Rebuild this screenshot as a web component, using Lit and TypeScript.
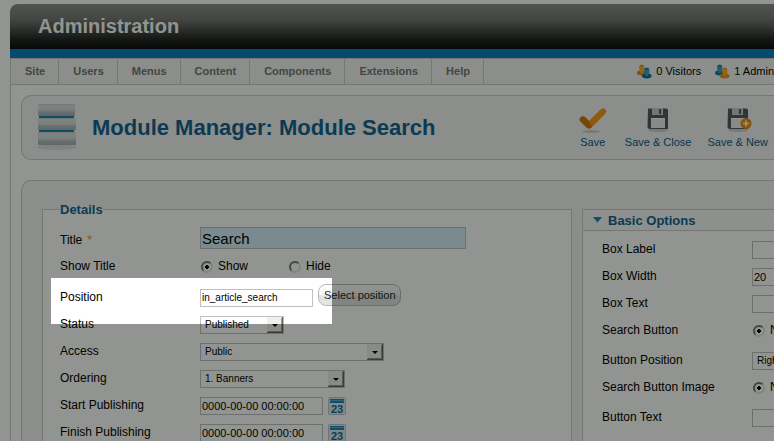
import { LitElement, html, css, svg } from "lit";
import { customElement } from "lit/decorators.js";

const calendar = html`<svg width="18" height="18" viewBox="0 0 18 18" aria-hidden="true">
  <rect x="0.5" y="0.5" width="17" height="17" rx="1" fill="#e4e9ed" stroke="#c3c9cd" />
  <rect x="2" y="2" width="14" height="4" fill="#1e87bd" />
  <path d="M2 3.500h14" stroke="#53addb" />
  <text x="9" y="15.500" text-anchor="middle" font-family="Liberation Sans, sans-serif" font-weight="bold" font-size="11" fill="#10699c">23</text>
</svg>`;

const person = (x: number, y: number, light: string, dark: string) => svg`<g transform="translate(${x} ${y})">
  <path d="M0 8.500C0 6.500 1 5.800 3 5.500L6.500 5.500C8.500 5.800 9.500 6.500 9.500 8.500Q9.300 10.300 4.700 10.400Q0.200 10.300 0 8.500Z" fill="${dark}" />
  <path d="M3 5L6.500 5L6.700 7L4.800 8.500L2.800 7Z" fill="${light}" />
  <ellipse cx="4.700" cy="3" rx="2.700" ry="3.200" fill="${light}" />
  <path d="M2.300 1.800Q2.800 -0.200 4.700 -0.200Q6.700 -0.200 7.200 1.800Q5 0.900 2.300 1.800Z" fill="${dark}" />
</g>`;

const users = (swap: boolean) => html`<svg width="16" height="16" viewBox="0 0 16 16" aria-hidden="true">
  ${swap ? person(0, 1, "#37a0cc", "#16769f") : person(0, 1, "#fbb02c", "#e58d18")}
  ${swap ? person(5, 4, "#fbb02c", "#ec9320") : person(5, 4, "#37a0cc", "#136c94")}
</svg>`;

const check = html`<svg width="30" height="28" viewBox="0 0 30 28" aria-hidden="true">
  <ellipse cx="13" cy="25.500" rx="9" ry="1.500" fill="#000" opacity=".16" />
  <path d="M2 12Q4 9 7 11L11 15L23 3Q26 1 28 4Q29 6 27 8L14 21Q11 24 8 21L2 15Q1 13.500 2 12Z" fill="#fa9a18" />
  <path d="M2 12Q4 9 7 11L11 15L14 21Q11 24 8 21L2 15Q1 13.500 2 12Z" fill="#cf780c" />
</svg>`;

const floppy = (plus: boolean) => html`<svg width="30" height="28" viewBox="0 0 30 28" aria-hidden="true">
  <ellipse cx="15" cy="24" rx="10" ry="2" fill="#000" opacity=".14" />
  <path d="M5 2.500H24L25 4V23H6L4.500 21.500Z" fill="#555a62" />
  <rect x="9" y="2" width="11" height="7" fill="#c9ced2" />
  <rect x="16" y="3" width="2" height="5" fill="#555a62" />
  <rect x="8" y="12" width="14" height="10" fill="#eeefee" />
  <path d="M8 12H22V13H8Z" fill="#fff" />
  ${plus
    ? svg`<circle cx="23" cy="17.500" r="5.500" fill="#ef8f16" />
      <path d="M23 14.500v6M20 17.500h6" stroke="#fff" stroke-width="1.600" />`
    : ""}
</svg>`;

const modules = html`<svg width="48" height="48" viewBox="0 0 48 48" aria-hidden="true">
  <defs>
    <linearGradient id="slab" x2="0" y2="1">
      <stop offset="0" stop-color="#c4cacf" /><stop offset=".15" stop-color="#dfe3e6" />
      <stop offset=".55" stop-color="#d3d7db" /><stop offset=".65" stop-color="#bac0c6" />
      <stop offset="1" stop-color="#a8afb6" />
    </linearGradient>
  </defs>
  <ellipse cx="25" cy="43" rx="20" ry="3" fill="#000" opacity=".08" />
  <rect x="7" y="11" width="35" height="4" fill="#1684b5" />
  <rect x="7" y="25" width="35" height="4" fill="#1684b5" />
  <rect x="6" y="0" width="37" height="12" rx="1" fill="url(#slab)" />
  <rect x="6" y="14" width="38" height="12" rx="1" fill="url(#slab)" />
  <rect x="6" y="28" width="38" height="13" rx="1" fill="url(#slab)" />
</svg>`;

@customElement("app-root")
export class AppRoot extends LitElement {
  static styles = css`
    :host {
      display: block;
      position: relative;
      overflow: hidden;
      height: 100vh;
      background: #fff;
      color: #000;
      font: 12px/15px "Liberation Sans", Arial, sans-serif;
    }
    * { box-sizing: border-box; }
    svg { display: block; flex: none; }
    .page { padding: 4px 0 0 10px; }
    .banner {
      height: 54px;
      display: flex;
      align-items: center;
      padding: 0 28px 1px;
      border-radius: 8px 0 0 0;
      border-bottom: 9px solid #067dbf;
      background: linear-gradient(#8e8e8e, #757575 35%, #222 80%, #0c0c0c);
    }
    .site { margin: 0; font-size: 20px; line-height: 24px; color: #fff; }
    .body { border-left: 1px solid #ccc; }
    .bar {
      display: flex;
      justify-content: space-between;
      height: 27px;
      border-top: 1px solid #ccc;
      border-bottom: 1px solid #ccc;
      background: #f5f5f5;
    }
    .menu { display: flex; }
    .menu a {
      padding: 0 13px 0 14px;
      font-size: 11px;
      line-height: 25px;
      font-weight: bold;
      color: #777;
      text-decoration: none;
      border-right: 1px solid #ccc;
    }
    .status { display: flex; gap: 14px; font-size: 11px; }
    .status span { display: flex; align-items: center; gap: 3px; white-space: nowrap; }
    .panel {
      margin-left: 10px;
      border: 1px solid #ccc;
      border-right: 0;
      background: #f4f4f4;
    }
    .head {
      display: flex;
      align-items: center;
      margin-top: 10px;
      height: 65px;
      padding: 0 6px 0 10px;
      border-radius: 10px 0 0 10px;
    }
    .head h2 { flex: 1; margin: 0 0 0 12px; font-size: 22px; line-height: 26px; color: #146295; white-space: nowrap; }
    .tools { display: flex; gap: 16px; }
    .tools button {
      display: flex;
      flex-direction: column;
      align-items: center;
      gap: 2px;
      min-width: 32px;
      padding: 0;
      border: 0;
      background: none;
      font: 11px/13px "Liberation Sans", Arial, sans-serif;
      color: #0b5c8c;
      white-space: nowrap;
    }
    .main {
      display: grid;
      grid-template-columns: minmax(0, 1fr) 192px;
      gap: 10px;
      align-items: start;
      margin-top: 20px;
      padding: 20px 0 0 20px;
      border-radius: 10px 0 0 0;
    }
    fieldset {
      min-width: 0;
      margin: 0;
      padding: 0 17px 20px;
      border: 1px solid #ccc;
      background: #fff;
    }
    legend { padding: 0; font-size: 13px; line-height: 17px; font-weight: bold; color: #146295; }
    .row { display: grid; grid-template-columns: 140px 1fr; align-items: center; height: 27px; }
    .row > span:first-child { white-space: nowrap; }
    .first { height: 26px; margin-top: 9px; }
    .first .ctl { align-self: start; }
    .first label { display: flex; gap: 5px; }
    .spaced { margin-top: 3px; }
    .position { position: relative; margin-top: 4px; }
    .req { color: #f18a00; }
    .ctl { display: flex; align-items: center; gap: 5px; }
    input[type="text"], select {
      height: 18px;
      margin: 0;
      padding: 0 1px;
      border: 1px solid #c0c0c0;
      border-radius: 0;
      background: #fff;
      color: #000;
      font: 11px/15px "Liberation Sans", Arial, sans-serif;
    }
    input.title { width: 266px; height: 22px; background: #d6eefb; font-size: 15px; }
    input.pos { width: 113px; font-size: 10px; }
    input.date { width: 123px; }
    input.narrow { width: 60px; }
    .drop { display: inline-grid; align-items: center; }
    .drop > * { grid-area: 1 / 1; }
    select { appearance: none; padding-left: 4px; font-size: 10px; }
    .drop svg { justify-self: end; margin-right: 1px; pointer-events: none; }
    .w84 { width: 84px; }
    .w184 { width: 184px; }
    .w145 { width: 145px; }
    .radios { display: flex; }
    .radios label { display: flex; align-items: center; gap: 5px; width: 88px; padding-left: 1px; }
    input[type="radio"] {
      appearance: none;
      width: 12px;
      height: 12px;
      margin: 0;
      border: 2px solid;
      border-color: #777 #e4e4e4 #e4e4e4 #777;
      border-radius: 6px;
      background: #fff;
    }
    input[type="radio"]:checked { background: radial-gradient(circle, #000 2px, #fff 2px); }
    .position .ctl { height: 27px; }
    .pick {
      align-self: start;
      height: 22px;
      padding: 0 4px 0 5px;
      border: 1px solid #bbb;
      border-radius: 8px;
      background: linear-gradient(#fff, #f2f4f3 50%, #dfe2e0 55%, #e4e6e5);
      font: 11px/18px "Liberation Sans", Arial, sans-serif;
      color: #222;
    }
    .icon { padding: 0; border: 0; background: none; }
    .options { margin: 8px 0 0; border: 1px solid #ccc; border-right: 0; background: #fff; }
    .options h3 {
      display: flex;
      align-items: center;
      gap: 6px;
      height: 21px;
      margin: 0 0 5px;
      padding-left: 10px;
      border-bottom: 1px solid #ccc;
      background: #f8f8f8;
      font-size: 13px;
      color: #146295;
    }
    .options .row { grid-template-columns: 150px 1fr; margin-left: 19px; }
    .spotlight {
      position: absolute;
      top: -6px;
      left: -9px;
      width: 281px;
      height: 46px;
      box-shadow: 0 0 0 2000px rgba(0, 6, 0, 0.43);
      pointer-events: none;
    }
  `;

  private select(id: string, value: string, width: string) {
    return html`<span class="drop ${width}">
      <select id=${id}><option>${value}</option></select>
      <svg width="16" height="16" viewBox="0 0 16 16" aria-hidden="true">
        <rect width="16" height="16" fill="#666" /><path d="M0 0H15V15H0Z" fill="#efefec" />
        <path d="M1 14.500H14.500V1" fill="none" stroke="#999" />
        <path d="M5 7H11L8 10Z" fill="#000" />
      </svg>
    </span>`;
  }

  private dateRow(id: string, label: string) {
    return html`<div class="row">
      <label for=${id}>${label}</label>
      <span class="ctl">
        <input class="date" type="text" id=${id} value="0000-00-00 00:00:00" />
        <button class="icon" type="button" aria-label="Pick date">${calendar}</button>
      </span>
    </div>`;
  }

  render() {
    return html`<div class="page">
      <header class="banner"><h1 class="site">Administration</h1></header>
      <div class="body">
        <div class="bar">
          <nav class="menu">
            ${["Site", "Users", "Menus", "Content", "Components", "Extensions", "Help"].map(
              (name) => html`<a href="#">${name}</a>`
            )}
          </nav>
          <div class="status">
            <span>${users(false)} 0 Visitors</span>
            <span>${users(true)} 1 Admin</span>
          </div>
        </div>
        <section class="panel head">
          ${modules}
          <h2>Module Manager: Module Search</h2>
          <div class="tools">
            <button type="button">${check}Save</button>
            <button type="button">${floppy(false)}Save &amp; Close</button>
            <button type="button">${floppy(true)}Save &amp; New</button>
          </div>
        </section>
        <main class="panel main">
          <fieldset>
            <legend>Details</legend>
            <div class="row first">
              <label for="title">Title <span class="req">*</span></label>
              <span class="ctl"><input class="title" type="text" id="title" value="Search" /></span>
            </div>
            <div class="row" role="radiogroup" aria-label="Show Title">
              <span>Show Title</span>
              <span class="radios">
                <label><input type="radio" name="show" checked />Show</label>
                <label><input type="radio" name="show" />Hide</label>
              </span>
            </div>
            <div class="row position">
              <label for="position">Position</label>
              <span class="ctl">
                <input class="pos" type="text" id="position" value="in_article_search" />
                <button class="pick" type="button">Select position</button>
              </span>
              <div class="spotlight"></div>
            </div>
            <div class="row"><label for="state">Status</label>${this.select("state", "Published", "w84")}</div>
            <div class="row"><label for="access">Access</label>${this.select("access", "Public", "w184")}</div>
            <div class="row"><label for="order">Ordering</label>${this.select("order", "1. Banners", "w145")}</div>
            ${this.dateRow("start", "Start Publishing")} ${this.dateRow("finish", "Finish Publishing")}
          </fieldset>
          <section class="options">
            <h3>
              <svg width="9" height="6" viewBox="0 0 9 6" aria-hidden="true"><path d="M0 0H9L4.500 5.500Z" fill="#1e87b5" /></svg>
              Basic Options
            </h3>
            <div class="row"><label for="label">Box Label</label><input class="narrow" type="text" id="label" /></div>
            <div class="row"><label for="width">Box Width</label><input class="narrow" type="text" id="width" value="20" /></div>
            <div class="row"><label for="text">Box Text</label><input class="narrow" type="text" id="text" /></div>
            <div class="row" role="radiogroup" aria-label="Search Button">
              <span>Search Button</span>
              <span class="radios"><label><input type="radio" name="button" checked />No</label></span>
            </div>
            <div class="row spaced"><label for="bpos">Button Position</label>${this.select("bpos", "Right", "w84")}</div>
            <div class="row" role="radiogroup" aria-label="Search Button Image">
              <span>Search Button Image</span>
              <span class="radios"><label><input type="radio" name="image" checked />No</label></span>
            </div>
            <div class="row spaced"><label for="btext">Button Text</label><input class="narrow" type="text" id="btext" /></div>
            <div class="row spaced"><span>Open Search autodiscovery</span></div>
          </section>
        </main>
      </div>
    </div>`;
  }
}
